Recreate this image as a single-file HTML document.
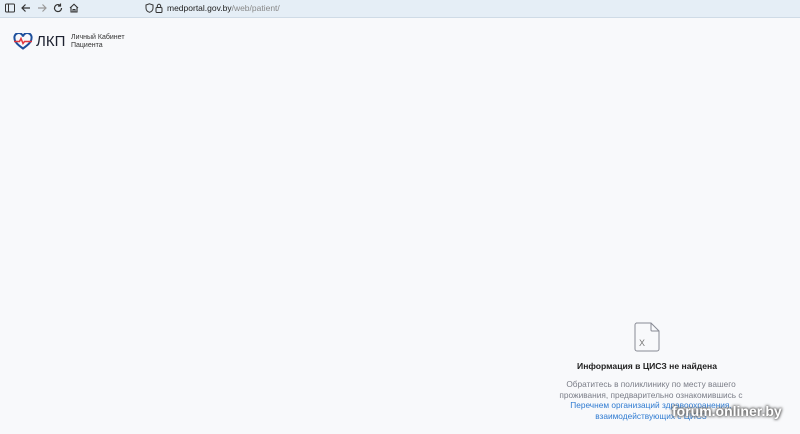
<!DOCTYPE html>
<html><head><meta charset="utf-8"><style>
body{margin:0;width:800px;height:434px;overflow:hidden;background:#f8f9fb;font-family:"Liberation Sans","DejaVu Sans",sans-serif;position:relative}
.bar{position:absolute;left:0;top:0;width:800px;height:17px;background:#e5eef6;border-bottom:1px solid #cfdbe6}
.ic{position:absolute;top:3px;color:#333;font-size:11px}
.url{position:absolute;left:167px;top:3px;font-size:8.5px;color:#222}
.url span{color:#888}
.t{position:absolute;color:#333}
</style></head><body>
<div class="bar">
<svg class="ic" style="left:5px" width="10" height="10" viewBox="0 0 10 10"><rect x="0.5" y="1" width="9" height="8" rx="1" fill="none" stroke="#333"/><line x1="3.5" y1="1" x2="3.5" y2="9" stroke="#333"/></svg>
<svg class="ic" style="left:21px" width="10" height="10" viewBox="0 0 10 10"><path d="M9 5H1M4.5 1.5L1 5l3.5 3.5" fill="none" stroke="#333" stroke-width="1.2"/></svg>
<svg class="ic" style="left:37px" width="10" height="10" viewBox="0 0 10 10"><path d="M1 5h8M5.5 1.5L9 5 5.5 8.5" fill="none" stroke="#999" stroke-width="1.2"/></svg>
<svg class="ic" style="left:53px" width="10" height="10" viewBox="0 0 10 10"><path d="M8.5 5A3.5 3.5 0 1 1 7 2.2M7.5 0.5v2.5H5" fill="none" stroke="#333" stroke-width="1.2"/></svg>
<svg class="ic" style="left:69px" width="10" height="10" viewBox="0 0 10 10"><path d="M1 5L5 1.2 9 5M2 4v5h6V4M4 9V6.5h2V9" fill="none" stroke="#333" stroke-width="1.1"/></svg>
<svg class="ic" style="left:145px" width="9" height="10" viewBox="0 0 9 10"><path d="M4.5 0.8L8 2v3c0 2.5-2 3.8-3.5 4.3C3 8.8 1 7.5 1 5V2z" fill="none" stroke="#333"/></svg>
<svg class="ic" style="left:155px" width="8" height="10" viewBox="0 0 8 10"><rect x="1" y="4.5" width="6" height="5" rx="1" fill="none" stroke="#333"/><path d="M2.3 4.5V3a1.7 1.7 0 0 1 3.4 0v1.5" fill="none" stroke="#333"/></svg>
<div class="url">medportal.gov.by<span>/web/patient/</span></div>
</div>
<svg style="position:absolute;left:13px;top:33px" width="20" height="17" viewBox="0 0 20 17"><path d="M10 15.5C5 12 1.5 9 1.5 5.3A3.8 3.8 0 0 1 10 3.5a3.8 3.8 0 0 1 8.5 1.8C18.5 9 15 12 10 15.5z" fill="none" stroke="#1d4f9c" stroke-width="2"/><path d="M1 8.5h5.5l1.5-3 2 5 1.5-2h7.5" fill="none" stroke="#e0393e" stroke-width="1.5"/></svg>
<div class="t" style="left:36px;top:33px;font-size:15px;color:#1d2130">ЛКП</div>
<div class="t" style="left:71px;top:34px;font-size:7px;line-height:8px;color:#333">Личный Кабинет<br>Пациента</div>
<svg style="position:absolute;left:634px;top:322px" width="26" height="30" viewBox="0 0 26 30"><path d="M2 1h15l8 8v18a2 2 0 0 1-2 2H3a2 2 0 0 1-2-2V3a2 2 0 0 1 2-2z" fill="none" stroke="#888a94" stroke-width="1"/><path d="M17 1v7a1 1 0 0 0 1 1h7" fill="none" stroke="#888a94"/><text x="5" y="24" font-size="9" fill="#777" font-family="Liberation Sans">X</text></svg>
<div class="t" style="left:520px;top:361px;width:254px;text-align:center;font-size:8.6px;font-weight:bold;color:#222">Информация в ЦИСЗ не найдена</div>
<div class="t" style="left:514px;top:379px;width:274px;text-align:center;font-size:8.3px;line-height:10.5px;color:#7a7d87">Обратитесь в поликлинику по месту вашего<br>проживания, предварительно ознакомившись с<br><span style="color:#2f7bd1">Перечнем организаций здравоохранения,<br>взаимодействующих с ЦИСЗ</span></div>
<div class="t" style="left:672px;top:403px;font-size:14px;font-weight:bold;color:#fff;text-shadow:0 0 3px #666,0 0 3px #666,0 0 2px #666">forum.onliner.by</div>
</body></html>
